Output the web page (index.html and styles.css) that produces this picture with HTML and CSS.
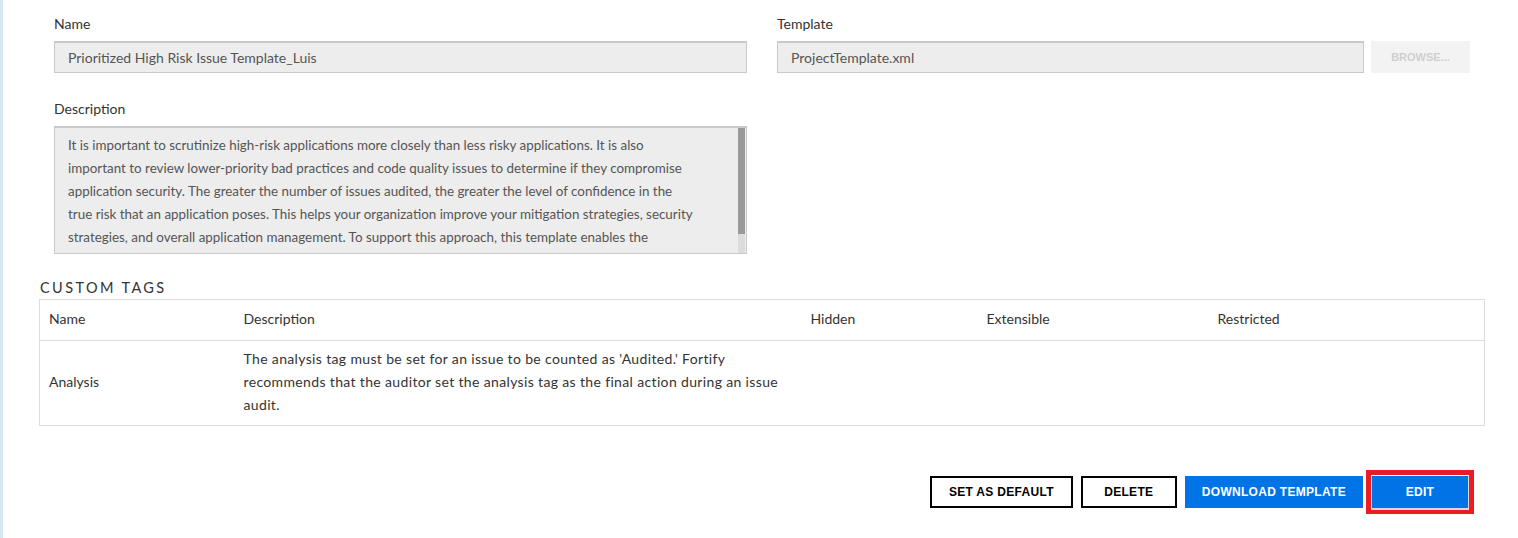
FILE: index.html
```html
<!DOCTYPE html>
<html lang="en">
<head>
    <meta charset="UTF-8">
    <meta name="viewport" content="width=device-width, initial-scale=1.0">
    <title>Issue Template</title>
    <link rel="stylesheet" href="styles.css">
</head>
<body>

<div class="page">

    <div class="form-grid">
        <div class="field">
            <label class="field-label">Name</label>
            <div class="box">Prioritized High Risk Issue Template_Luis</div>
        </div>

        <div class="field">
            <label class="field-label">Template</label>
            <div class="file-row">
                <div class="box">ProjectTemplate.xml</div>
                <button class="browse-btn" disabled>BROWSE...</button>
            </div>
        </div>

        <div class="field">
            <label class="field-label">Description</label>
            <div class="textarea">
                <div class="textarea-text">
                    It is important to scrutinize high-risk applications more closely than less risky applications. It is also<br>
                    important to review lower-priority bad practices and code quality issues to determine if they compromise<br>
                    application security. The greater the number of issues audited, the greater the level of confidence in the<br>
                    true risk that an application poses. This helps your organization improve your mitigation strategies, security<br>
                    strategies, and overall application management. To support this approach, this template enables the
                </div>
                <div class="scrollbar"><div class="thumb"></div></div>
            </div>
        </div>
    </div>

    <h4 class="section-title">CUSTOM TAGS</h4>
    <table class="tags">
        <colgroup>
            <col class="c-name">
            <col class="c-descp">
            <col class="c-hidden">
            <col class="c-ext">
            <col>
        </colgroup>
        <thead>
            <tr>
                <th>Name</th>
                <th>Description</th>
                <th>Hidden</th>
                <th>Extensible</th>
                <th>Restricted</th>
            </tr>
        </thead>
        <tbody>
            <tr>
                <td>Analysis</td>
                <td class="tag-descp">The analysis tag must be set for an issue to be counted as 'Audited.' Fortify<br>recommends that the auditor set the analysis tag as the final action during an issue<br>audit.</td>
                <td></td>
                <td></td>
                <td></td>
            </tr>
        </tbody>
    </table>

    <div class="actions">
        <button class="btn btn-outline">SET AS DEFAULT</button>
        <button class="btn btn-outline">DELETE</button>
        <button class="btn btn-blue">DOWNLOAD TEMPLATE</button>
        <button class="btn btn-blue btn-focus">EDIT</button>
    </div>

</div>

</body>
</html>
```

FILE: styles.css
```css
*{
    margin: 0;
    padding: 0;
    box-sizing: border-box;
}

body{
    font-family: Lato, "Open Sans", sans-serif;
    font-size: 14px;
    color: #333;
    background-color: #fff;
    border-left: 3px solid #d6eaf5;
    height: 538px;
    overflow: hidden;
}

.page{
    padding: 15px 50px 0 36px;
}

.form-grid{
    display: grid;
    grid-template-columns: 693px 693px;
    column-gap: 30px;
    row-gap: 27px;
    padding-left: 15px;
}

.field-label{
    display: block;
    line-height: 18px;
    margin-bottom: 8px;
}

.box{
    height: 32px;
    line-height: 30px;
    padding: 0 13px;
    background-color: #ededed;
    border: 1px solid #c9c9c9;
    border-top-width: 2px;
    color: #555;
    font-size: 14px;
}

.file-row{
    display: flex;
    gap: 7px;
}

.file-row .box{
    flex: 1;
}

.browse-btn{
    width: 99px;
    height: 32px;
    border: none;
    background-color: #f3f3f3;
    color: #cfcfcf;
    font-family: "Liberation Sans", sans-serif;
    font-weight: bold;
    font-size: 11px;
}

.textarea{
    display: flex;
    height: 128px;
    background-color: #ededed;
    border: 1px solid #c9c9c9;
    border-top-width: 2px;
    overflow: hidden;
}

.textarea-text{
    flex: 1;
    padding: 6px 13px;
    line-height: 23px;
    color: #555;
    font-size: 13.4px;
    white-space: nowrap;
}

.scrollbar{
    width: 7px;
    margin-right: 1px;
    background-color: #dcdcdc;
}

.thumb{
    height: 106px;
    background-color: #999;
}

.section-title{
    margin-top: 25px;
    margin-bottom: 2px;
    font-weight: normal;
    font-size: 14.5px;
    line-height: 18px;
    letter-spacing: 2.4px;
    color: #333;
    padding-left: 1px;
}

.tags{
    width: 1446px;
    border-collapse: collapse;
    table-layout: fixed;
    border: 1px solid #dcdcdc;
}

.c-name{ width: 195px; }
.c-descp{ width: 567px; }
.c-hidden{ width: 176px; }
.c-ext{ width: 231px; }

.tags th{
    height: 41px;
    text-align: left;
    font-weight: normal;
    padding: 0 9px 3px;
    border-bottom: 1px solid #dcdcdc;
}

.tags td{
    height: 85px;
    padding: 4px 9px 8px;
    line-height: 23px;
    vertical-align: middle;
}

.tags .tag-descp{
    white-space: nowrap;
    letter-spacing: 0.35px;
}

.actions{
    display: flex;
    justify-content: flex-end;
    gap: 8px;
    margin-top: 50px;
}

.btn{
    min-width: 96px;
    height: 32px;
    padding: 0 17px;
    font-family: "Liberation Sans", sans-serif;
    font-weight: bold;
    font-size: 12px;
    letter-spacing: 0.3px;
    cursor: pointer;
}

.btn-outline{
    background-color: #fff;
    color: #000;
    border: 2px solid #000;
}

.btn-blue{
    background-color: #0073e7;
    color: #fff;
    border: none;
}

.btn-focus{
    margin-left: 1px;
    box-shadow: 0 1px 0 1px #d8d8d8, 0 0 0 1px #fff, 0 0 0 6px #ed1c24;
}
```
